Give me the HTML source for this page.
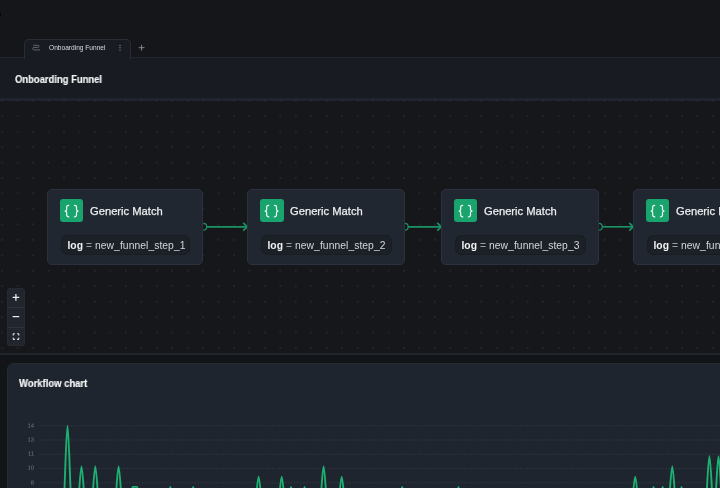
<!DOCTYPE html>
<html><head><meta charset="utf-8">
<style>
*{box-sizing:border-box;margin:0;padding:0}
html,body{width:720px;height:488px;overflow:hidden;background:#15161a;font-family:"Liberation Sans",sans-serif;color:#e8eaed}
.abs{position:absolute}
#tabtext,#title,#ptitle,.ntitle,.pill,.yl{will-change:transform}
#tab{left:24px;top:38.5px;width:106.5px;height:20px;background:#181b22;border:1px solid #282c34;border-bottom:none;border-radius:5px 5px 0 0;z-index:2}
#tabtext{left:49px;top:43.5px;font-size:6.6px;color:#d9dce0;z-index:3;white-space:nowrap}
#header{left:0;top:57px;width:720px;height:42px;background:#181b22;border-top:1px solid #22262d}
#hb1{display:none}
#hb2{z-index:0;left:0;top:98px;width:720px;height:2.6px;background:#20252d}
#title{left:14.9px;top:74px;font-size:10.3px;font-weight:bold;transform:scaleX(0.917);transform-origin:0 0;color:#f6f7f8;-webkit-text-stroke:0.15px #f6f7f8;white-space:nowrap}
#canvas{left:0;top:100px;width:720px;height:253px;background:transparent;overflow:hidden}
#cbg{left:0;top:100.6px;width:720px;height:252.4px;background:#16171b}
#sep{left:0;top:353px;width:720px;height:2px;background:#20242b}
#band{left:0;top:355px;width:720px;height:133px;background:#131418}
.node{position:absolute;top:189px;height:75.6px;background:#212730;border:1px solid #2c323b;border-radius:5px}
.ico{position:absolute;left:12.2px;top:9px;width:23.2px;height:23px;background:#19a36d;border-radius:3px}
.ntitle{position:absolute;left:41.9px;top:14.5px;font-size:11.2px;color:#eceef0;-webkit-text-stroke:0.25px #eceef0;white-space:nowrap}
.pill{position:absolute;left:12.5px;top:45px;height:19.6px;background:#1c2027;border:1px solid #191c22;border-radius:6.5px;font-size:10.3px;letter-spacing:0.07px;color:#d4d7db;white-space:nowrap;padding-left:5.4px;padding-top:1.2px;line-height:17.4px}
.pill b{color:#f2f3f5}
.pill i{font-style:normal;color:#9ba1a8}
#controls{left:7px;top:287.5px;width:18px;height:58px;background:#21262e;border-radius:2.5px;border:1px solid #262b33}
#panel{left:7.4px;top:362.8px;width:760px;height:200px;background:#1f252e;border-radius:6.5px;border:1px solid #252a33}
#ptitle{left:19.4px;top:377.7px;font-size:10.2px;transform:scaleX(0.93);transform-origin:0 0;font-weight:bold;color:#f6f7f8;-webkit-text-stroke:0.15px #f6f7f8;white-space:nowrap}
.yl{position:absolute;font-size:11.8px;line-height:14px;color:#777c84;text-align:right;width:40px;left:-5.7px;transform:scale(0.5);transform-origin:100% 0}
</style></head><body>
<div class="abs" style="left:0;top:12.8px;width:1px;height:3px;background:#060607;z-index:9"></div>
<!-- tab -->
<div id="tab" class="abs"></div>
<svg class="abs" style="left:30px;top:42px;z-index:3" width="14" height="11" viewBox="0 0 14 11">
  <path d="M3.6 3.3 H7.9 A1.05 1.05 0 0 1 7.9 5.4 H4 A1.25 1.25 0 0 0 4 7.9 H9.6" fill="none" stroke="#626871" stroke-width="0.95" stroke-linecap="round"/>
</svg>
<div id="tabtext" class="abs">Onboarding Funnel</div>
<svg class="abs" style="left:118px;top:44px;z-index:3" width="4" height="8">
  <circle cx="2" cy="1.5" r="0.7" fill="#7c828a"/><circle cx="2" cy="3.8" r="0.7" fill="#7c828a"/><circle cx="2" cy="6.1" r="0.7" fill="#7c828a"/>
</svg>
<svg class="abs" style="left:138px;top:44px" width="8" height="8">
  <path d="M3.6 0.8V6.6M0.7 3.7H6.5" stroke="#9ca1a8" stroke-width="0.8"/>
</svg>

<div id="header" class="abs"></div>
<div id="hb1" class="abs"></div><div id="hb2" class="abs"></div>
<div id="title" class="abs">Onboarding Funnel</div>

<div id="cbg" class="abs"></div>
<div id="canvas" class="abs">
  <svg width="720" height="253" style="position:absolute;left:0;top:0">
    <defs>
      <pattern id="dots" x="2.25" y="0.75" width="15.45" height="15.45" patternUnits="userSpaceOnUse">
        <circle cx="0" cy="0" r="0.65" fill="#353b46"/>
        <circle cx="15.45" cy="0" r="0.65" fill="#353b46"/>
        <circle cx="0" cy="15.45" r="0.65" fill="#353b46"/>
        <circle cx="15.45" cy="15.45" r="0.65" fill="#353b46"/>
      </pattern>
    </defs>
    <rect x="0" y="0" width="720" height="253" fill="url(#dots)"/>
  </svg>
</div>

<!-- edges -->
<svg class="abs" style="left:0;top:180px" width="720" height="100">
  <g fill="none" stroke="#1c9364" stroke-width="1.65">
    <path d="M206.3 46.8 H246.5"/>
    <path d="M243.2 42.9 L247.2 46.8 L243.2 50.7"/>
    <path d="M407.8 46.8 H440.5"/>
    <path d="M437.2 42.9 L441.2 46.8 L437.2 50.7"/>
    <path d="M601.9 46.8 H632.5"/>
    <path d="M629.2 42.9 L633.2 46.8 L629.2 50.7"/>
    <path d="M203.3 43.4 A3.4 3.4 0 0 1 203.3 50.2" stroke-width="1.2"/>
    <path d="M404.8 43.4 A3.4 3.4 0 0 1 404.8 50.2" stroke-width="1.2"/>
    <path d="M598.9 43.4 A3.4 3.4 0 0 1 598.9 50.2" stroke-width="1.2"/>
  </g>
</svg>

<div class="node" style="left:47.1px;width:156.2px">
  <div class="ico"><svg width="23.2" height="23" viewBox="0 0 23.2 23" style="position:absolute;left:0;top:0"><g fill="none" stroke="#f4f6f5" stroke-width="1.2" stroke-linecap="round"><path d="M8.8 6.3 C7.3 6.3 6.7 6.9 6.7 8.1 V10.6 C6.7 11.6 6.1 12.1 4.7 12.1 C6.1 12.1 6.7 12.6 6.7 13.6 V16.1 C6.7 17.3 7.3 17.9 8.8 17.9"/><path d="M14.4 6.3 C15.9 6.3 16.5 6.9 16.5 8.1 V10.6 C16.5 11.6 17.1 12.1 18.5 12.1 C17.1 12.1 16.5 12.6 16.5 13.6 V16.1 C16.5 17.3 15.9 17.9 14.4 17.9"/></g></svg></div>
  <div class="ntitle">Generic Match</div>
  <div class="pill" style="width:129.2px"><b>log</b> <i>=</i> new_funnel_step_1</div>
</div>
<div class="node" style="left:247.2px;width:157.5px">
  <div class="ico"><svg width="23.2" height="23" viewBox="0 0 23.2 23" style="position:absolute;left:0;top:0"><g fill="none" stroke="#f4f6f5" stroke-width="1.2" stroke-linecap="round"><path d="M8.8 6.3 C7.3 6.3 6.7 6.9 6.7 8.1 V10.6 C6.7 11.6 6.1 12.1 4.7 12.1 C6.1 12.1 6.7 12.6 6.7 13.6 V16.1 C6.7 17.3 7.3 17.9 8.8 17.9"/><path d="M14.4 6.3 C15.9 6.3 16.5 6.9 16.5 8.1 V10.6 C16.5 11.6 17.1 12.1 18.5 12.1 C17.1 12.1 16.5 12.6 16.5 13.6 V16.1 C16.5 17.3 15.9 17.9 14.4 17.9"/></g></svg></div>
  <div class="ntitle">Generic Match</div>
  <div class="pill" style="width:131px"><b>log</b> <i>=</i> new_funnel_step_2</div>
</div>
<div class="node" style="left:441.1px;width:157.8px">
  <div class="ico"><svg width="23.2" height="23" viewBox="0 0 23.2 23" style="position:absolute;left:0;top:0"><g fill="none" stroke="#f4f6f5" stroke-width="1.2" stroke-linecap="round"><path d="M8.8 6.3 C7.3 6.3 6.7 6.9 6.7 8.1 V10.6 C6.7 11.6 6.1 12.1 4.7 12.1 C6.1 12.1 6.7 12.6 6.7 13.6 V16.1 C6.7 17.3 7.3 17.9 8.8 17.9"/><path d="M14.4 6.3 C15.9 6.3 16.5 6.9 16.5 8.1 V10.6 C16.5 11.6 17.1 12.1 18.5 12.1 C17.1 12.1 16.5 12.6 16.5 13.6 V16.1 C16.5 17.3 15.9 17.9 14.4 17.9"/></g></svg></div>
  <div class="ntitle">Generic Match</div>
  <div class="pill" style="width:131px"><b>log</b> <i>=</i> new_funnel_step_3</div>
</div>
<div class="node" style="left:633px;width:157.8px">
  <div class="ico"><svg width="23.2" height="23" viewBox="0 0 23.2 23" style="position:absolute;left:0;top:0"><g fill="none" stroke="#f4f6f5" stroke-width="1.2" stroke-linecap="round"><path d="M8.8 6.3 C7.3 6.3 6.7 6.9 6.7 8.1 V10.6 C6.7 11.6 6.1 12.1 4.7 12.1 C6.1 12.1 6.7 12.6 6.7 13.6 V16.1 C6.7 17.3 7.3 17.9 8.8 17.9"/><path d="M14.4 6.3 C15.9 6.3 16.5 6.9 16.5 8.1 V10.6 C16.5 11.6 17.1 12.1 18.5 12.1 C17.1 12.1 16.5 12.6 16.5 13.6 V16.1 C16.5 17.3 15.9 17.9 14.4 17.9"/></g></svg></div>
  <div class="ntitle">Generic Match</div>
  <div class="pill" style="width:131px"><b>log</b> <i>=</i> new_funnel_step_4</div>
</div>

<div id="controls" class="abs">
  <div style="position:absolute;left:0;top:18.2px;width:16px;height:1px;background:#2c313a"></div>
  <div style="position:absolute;left:0;top:38px;width:16px;height:1px;background:#2c313a"></div>
  <svg style="position:absolute;left:0;top:0" width="16" height="56" viewBox="0 0 16 56"><g fill="none" stroke="#eceef0" stroke-width="1.25">
    <path d="M7.9 5.1V11.7M4.6 8.4H11.2"/>
    <path d="M4.6 27.6H11.2"/>
    <path d="M5.2 46.4V45.4Q5.2 44.8 5.8 44.8H6.9M9.1 44.8H10.2Q10.8 44.8 10.8 45.4V46.4M10.8 48.8V49.8Q10.8 50.4 10.2 50.4H9.1M6.9 50.4H5.8Q5.2 50.4 5.2 49.8V48.8" stroke-width="1.1"/>
  </g></svg>
</div>

<div id="sep" class="abs"></div>
<div id="band" class="abs"></div>
<div id="panel" class="abs"></div>
<div id="ptitle" class="abs">Workflow chart</div>
<svg class="abs" style="left:0;top:0;z-index:5" width="720" height="488">
  <g stroke="#323844" stroke-width="1" stroke-dasharray="1.6 1.5">
    <path d="M39.5 425.7H720"/>
    <path d="M39.5 440H720"/>
    <path d="M39.5 454.3H720"/>
    <path d="M39.5 468.5H720"/>
    <path d="M39.5 482.8H720"/>
  </g>
  <path d="M40.00 515.45 C47.62 515.45 55.23 515.45 62.85 515.45 C64.40 515.45 65.95 425.60 67.50 425.60 C69.05 425.60 70.60 515.45 72.15 515.45 C73.72 515.45 75.28 515.45 76.85 515.45 C78.40 515.45 79.95 466.44 81.50 466.44 C83.05 466.44 84.60 515.45 86.15 515.45 C87.65 515.45 89.15 515.45 90.65 515.45 C92.20 515.45 93.75 466.44 95.30 466.44 C96.85 466.44 98.40 515.45 99.95 515.45 C104.62 515.45 109.28 515.45 113.95 515.45 C115.50 515.45 117.05 466.44 118.60 466.44 C120.15 466.44 121.70 515.45 123.25 515.45 C124.82 515.45 126.38 515.45 127.95 515.45 C129.50 515.45 131.05 486.86 132.60 486.86 C134.13 486.86 135.67 486.86 137.20 486.86 C138.75 486.86 140.30 515.45 141.85 515.45 C149.78 515.45 157.72 515.45 165.65 515.45 C167.20 515.45 168.75 486.86 170.30 486.86 C171.85 486.86 173.40 515.45 174.95 515.45 C179.48 515.45 184.02 515.45 188.55 515.45 C190.10 515.45 191.65 486.86 193.20 486.86 C194.75 486.86 196.30 515.45 197.85 515.45 C216.55 515.45 235.25 515.45 253.95 515.45 C255.50 515.45 257.05 476.65 258.60 476.65 C260.15 476.65 261.70 515.45 263.25 515.45 C267.85 515.45 272.45 515.45 277.05 515.45 C278.60 515.45 280.15 476.65 281.70 476.65 C283.25 476.65 284.80 515.45 286.35 515.45 C287.90 515.45 289.45 486.86 291.00 486.86 C292.55 486.86 294.10 515.45 295.65 515.45 C297.08 515.45 298.52 515.45 299.95 515.45 C301.50 515.45 303.05 486.86 304.60 486.86 C306.15 486.86 307.70 515.45 309.25 515.45 C312.48 515.45 315.72 515.45 318.95 515.45 C320.50 515.45 322.05 466.44 323.60 466.44 C325.15 466.44 326.70 515.45 328.25 515.45 C331.18 515.45 334.12 515.45 337.05 515.45 C338.60 515.45 340.15 476.65 341.70 476.65 C343.25 476.65 344.80 515.45 346.35 515.45 C363.42 515.45 380.48 515.45 397.55 515.45 C399.10 515.45 400.65 486.86 402.20 486.86 C403.75 486.86 405.30 515.45 406.85 515.45 C422.52 515.45 438.18 515.45 453.85 515.45 C455.40 515.45 456.95 486.86 458.50 486.86 C460.05 486.86 461.60 515.45 463.15 515.45 C518.95 515.45 574.75 515.45 630.55 515.45 C632.10 515.45 633.65 476.65 635.20 476.65 C636.75 476.65 638.30 515.45 639.85 515.45 C642.88 515.45 645.92 515.45 648.95 515.45 C650.50 515.45 652.05 486.86 653.60 486.86 C655.15 486.86 656.70 515.45 658.25 515.45 C659.73 515.45 661.22 486.86 662.70 486.86 C664.25 486.86 665.80 515.45 667.35 515.45 C669.00 515.45 670.65 466.44 672.30 466.44 C673.85 466.44 675.40 515.45 676.95 515.45 C678.47 515.45 679.98 486.86 681.50 486.86 C683.05 486.86 684.60 515.45 686.15 515.45 C692.35 515.45 698.55 515.45 704.75 515.45 C706.30 515.45 707.85 456.23 709.40 456.23 C710.95 456.23 712.50 515.45 714.05 515.45 C715.53 515.45 717.02 456.23 718.50 456.23 C720.05 456.23 721.60 515.45 723.15 515.45 C735.43 515.45 747.72 515.45 760.00 515.45" fill="none" stroke="#1db073" stroke-width="1.9" stroke-linejoin="round"/>
</svg>
<div class="yl" style="top:421.5px">14</div>
<div class="yl" style="top:435.6px">13</div>
<div class="yl" style="top:449.9px">11</div>
<div class="yl" style="top:464px">10</div>
<div class="yl" style="top:478.7px">8</div>


</body></html>
